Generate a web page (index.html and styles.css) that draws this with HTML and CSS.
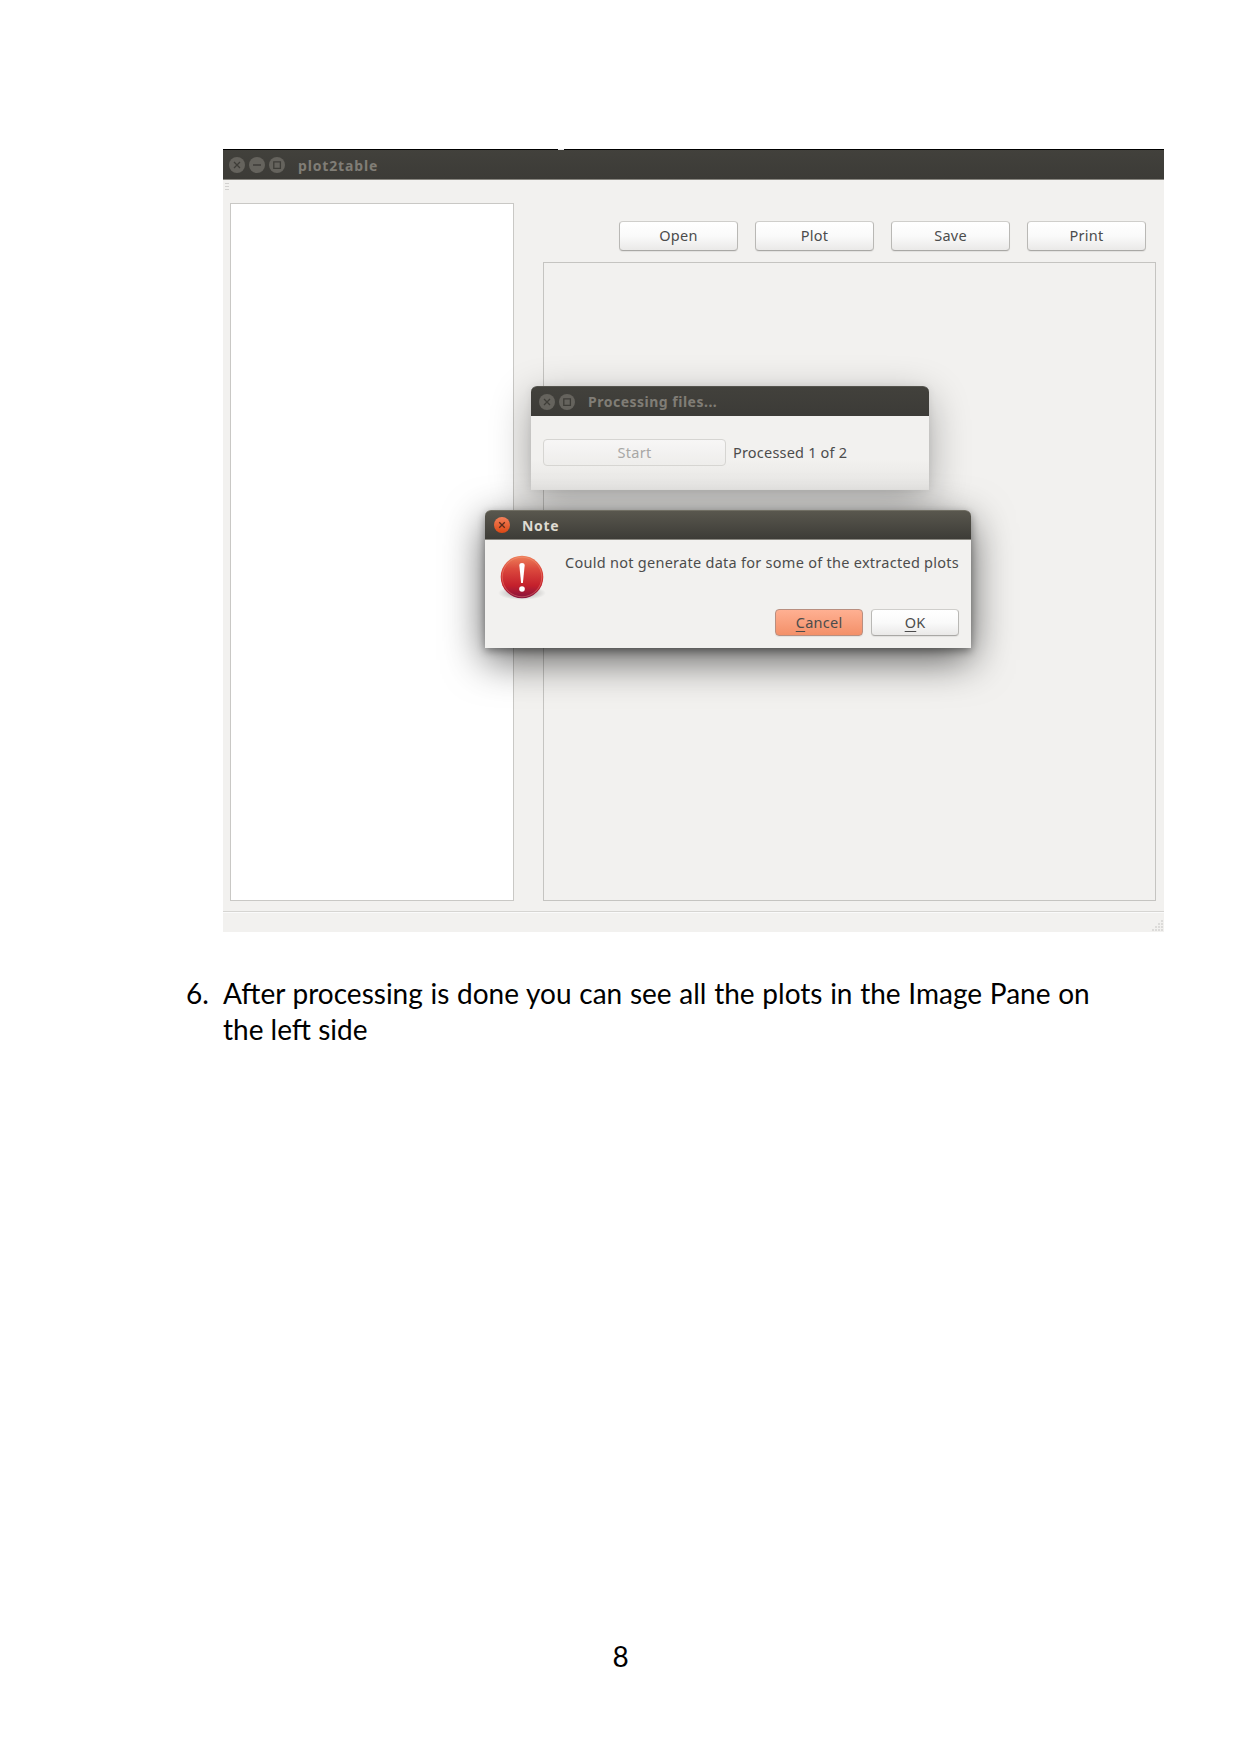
FILE: index.html
```html
<!DOCTYPE html>
<html lang="en">
<head>
<meta charset="utf-8">
<title>plot2table manual</title>
<link rel="stylesheet" href="styles.css">
</head>
<body>
<main class="page">
  <section class="figure">
    <header class="titlebar titlebar-main">
      <svg class="controls" width="56" height="16" viewBox="0 0 56 16">
        <g fill="#65635d"><circle cx="8" cy="8" r="8"/><circle cx="28" cy="8" r="8"/><circle cx="48" cy="8" r="8"/></g>
        <g fill="none" stroke="#3e3d38" stroke-width="1.3"><path d="M5 5l6 6M11 5l-6 6M24 8h8"/><path d="M44.8 4.8h6.6v6.6h-6.6z"/></g>
      </svg>
      <span class="title title-main">plot2table</span>
    </header>
    <div class="workspace">
      <div class="handle"><i></i><i></i><i></i></div>
      <div class="left-pane"></div>
      <div class="right">
        <nav class="toolbar">
          <button class="btn">Open</button>
          <button class="btn">Plot</button>
          <button class="btn">Save</button>
          <button class="btn">Print</button>
        </nav>
        <div class="canvas"></div>
      </div>
    </div>
    <footer class="status">
      <svg width="12" height="12" viewBox="0 0 12 12" fill="#dcdbd9"><path d="M9 0h2v2H9zM6 3h2v2H6zM9 3h2v2H9zM3 6h2v2H3zM6 6h2v2H6zM9 6h2v2H9zM0 9h2v2H0zM3 9h2v2H3zM6 9h2v2H6zM9 9h2v2H9z"/></svg>
    </footer>

    <div class="dialog progress">
      <header class="titlebar">
        <svg class="controls" width="36" height="16" viewBox="0 0 36 16">
          <g fill="#65635d"><circle cx="8" cy="8" r="8"/><circle cx="28" cy="8" r="8"/></g>
          <g fill="none" stroke="#3e3d38" stroke-width="1.3"><path d="M5 5l6 6M11 5l-6 6"/><path d="M24.8 4.8h6.6v6.6h-6.6z"/></g>
        </svg>
        <span class="title title-progress">Processing files...</span>
      </header>
      <div class="progress-body">
        <button class="btn btn-start" disabled>Start</button>
        <span class="processed">Processed 1 of 2</span>
      </div>
    </div>

    <div class="dialog note">
      <header class="titlebar titlebar-active">
        <svg class="controls" width="16" height="16" viewBox="0 0 16 16">
          <defs><linearGradient id="close" x2="0" y2="1"><stop stop-color="#f4805a"/><stop offset="1" stop-color="#dc4814"/></linearGradient></defs>
          <circle cx="8" cy="8" r="8" fill="url(#close)"/>
          <path d="M5.2 5.2l5.6 5.6M10.8 5.2l-5.6 5.6" stroke="#5a2c1c" stroke-width="1.3"/>
        </svg>
        <span class="title title-note">Note</span>
      </header>
      <div class="note-body">
        <svg class="alert" width="50" height="46" viewBox="0 0 50 46">
          <defs>
            <linearGradient id="red" x2="0" y2="1"><stop stop-color="#ee8059"/><stop offset=".3" stop-color="#dc4b3e"/><stop offset=".7" stop-color="#c4202c"/><stop offset="1" stop-color="#85123e"/></linearGradient>
            <radialGradient id="shade"><stop stop-color="#000" stop-opacity=".35"/><stop offset="1" stop-color="#000" stop-opacity="0"/></radialGradient>
          </defs>
          <ellipse cx="25" cy="38" rx="24" ry="7" fill="url(#shade)"/>
          <circle cx="25" cy="22" r="21.3" fill="url(#red)"/>
          <circle cx="25" cy="22" r="19.8" fill="none" stroke="#f6a184" stroke-opacity=".4"/>
          <path d="M22.3 10q0-2 2.7-2t2.7 2l-1.8 18h-1.8z" fill="#fff"/><circle cx="25" cy="34" r="2.8" fill="#fff"/>
        </svg>
        <p class="message">Could not generate data for some of the extracted plots</p>
        <div class="actions">
          <button class="btn btn-small btn-cancel"><u>C</u>ancel</button>
          <button class="btn btn-small"><u>O</u>K</button>
        </div>
      </div>
    </div>
  </section>

  <div class="step">
    <span class="step-number">6.</span>
    <p class="step-text"><span class="line line-one">After processing is done you can see all the plots in the Image Pane on</span> <span class="line line-two">the left side</span></p>
  </div>
  <footer class="page-number">8</footer>
</main>
</body>
</html>
```
FILE: styles.css
```css
* { box-sizing: border-box; }
body { margin: 0; background: #fff; }
.page { width: 1241px; height: 1754px; padding-top: 149px; display: flex; flex-direction: column; overflow: hidden; }
.figure { position: relative; width: 941px; height: 783px; margin-left: 223px; background: #f2f1ef; font-family: "Noto Sans", "Open Sans", sans-serif; color: #4c4c4c; display: flex; flex-direction: column; overflow: hidden; }
.titlebar { height: 30px; padding: 0 8px; display: flex; align-items: center; background: linear-gradient(#42413c, #3c3b37); border-top: 1px solid #55544e; border-radius: 6px 6px 0 0; }
.titlebar-main { height: 31px; flex: none; padding: 2px 6px 0; border-top: 0; border-bottom: 1px solid #87857f; border-radius: 0; background: linear-gradient(90deg, #000 335px, #e6e6e6 335px 341px, #000 341px) 0 0 / 100% 1px no-repeat, linear-gradient(#42413c, #3c3b37); }
.titlebar-active { padding-left: 9px; background: linear-gradient(#59574e, #3d3c37); border-top-color: #716f64; border-bottom: 1px solid #8b8982; }
.controls { display: block; flex: none; }
.title { font-size: 14px; font-weight: 700; color: #807d76; margin-left: 13px; white-space: nowrap; }
.title-main { letter-spacing: .85px; }
.title-progress { letter-spacing: .5px; }
.title-note { color: #dfdbd2; letter-spacing: .7px; margin-left: 12px; }
.workspace { height: 731px; display: flex; padding-left: 1px; }
.handle { width: 6px; padding: 3px 0 0 1px; display: flex; flex-direction: column; gap: 2px; }
.handle i { width: 4px; height: 1px; background: #d2d1cf; }
.left-pane { width: 284px; height: 698px; margin-top: 23px; background: #fff; border: 1px solid #c9c8c5; }
.right { width: 613px; margin-left: 29px; }
.toolbar { display: flex; justify-content: flex-end; gap: 17px; padding: 41px 10px 0 0; }
.canvas { height: 639px; margin-top: 11px; border: 1px solid #c5c4c1; }
.btn { width: 119px; height: 30px; padding: 0 0 1px; border: 1px solid #b9b8b5; border-top-color: #cfcecb; border-bottom-color: #a9a8a5; border-radius: 4px; background: linear-gradient(#fff, #fafafa 50%, #eae9e8); box-shadow: 0 1px 1px #0001; font: 14.5px/1 "Noto Sans", "Open Sans", sans-serif; letter-spacing: .25px; color: #4c4c4c; }
.status { flex: 1; border-top: 1px solid #d6d5d2; box-shadow: inset 0 1px #fafafa; display: flex; justify-content: flex-end; align-items: flex-end; }
.status svg { display: block; }
.dialog { position: absolute; border-radius: 6px 6px 0 0; background: #f2f1ef; }
.progress { left: 308px; top: 237px; width: 398px; height: 104px; background: linear-gradient(#f2f1ef 70%, #e6e5e3); box-shadow: 0 12px 40px #00000052, 0 0 8px #00000012; }
.progress-body { display: flex; align-items: center; gap: 7px; padding: 23px 12px; }
.btn-start { width: 183px; height: 27px; padding: 0; color: #a8a7a5; border-color: #d6d5d2; background: linear-gradient(#f7f6f6, #eeedeb); box-shadow: none; }
.processed { font-size: 14.5px; line-height: 20px; white-space: nowrap; letter-spacing: .2px; padding-bottom: 2px; }
.note { left: 262px; top: 361px; width: 486px; height: 138px; box-shadow: 0 12px 40px #000000a0, 0 3px 9px #00000060; }
.note-body { display: grid; grid-template-columns: 68px 1fr; grid-template-rows: 56px 27px; padding: 13px 12px 0; row-gap: 0; }
.alert { grid-row: 1 / 3; margin-top: 2px; }
.message { margin: -1px 0 0; font-size: 14.5px; line-height: 20px; white-space: nowrap; letter-spacing: .27px; }
.actions { display: flex; justify-content: flex-end; gap: 8px; }
.btn-small { width: 88px; height: 27px; padding: 0; }
.btn-small u { text-underline-offset: 3px; text-decoration-thickness: 1px; }
.btn-cancel { background: linear-gradient(#ffb092, #f39069); border-color: #b98f80; }
.step { display: flex; margin: 43px 0 0 186px; font: 28px/36px Lato, sans-serif; color: #000; }
.step-number { width: 37px; }
.step-text { margin: 0; }
.line { display: block; white-space: nowrap; }
.line-one { word-spacing: .55px; }
.page-number { margin: auto 0 78px; text-align: center; font: 28px/40px Lato, sans-serif; color: #000; }
```
